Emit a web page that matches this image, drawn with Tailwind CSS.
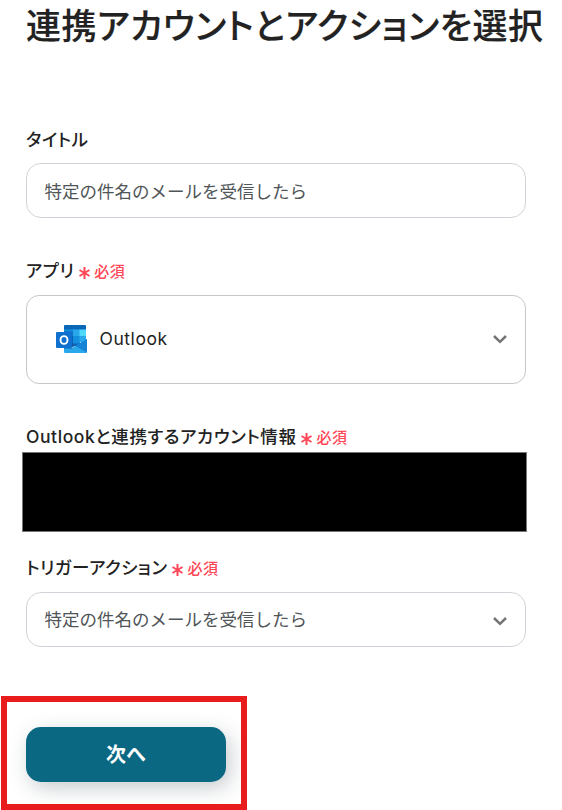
<!DOCTYPE html>
<html lang="ja">
<head>
<meta charset="utf-8">
<title>連携アカウントとアクションを選択</title>
<script src="https://cdn.jsdelivr.net/npm/@tailwindcss/browser@4"></script>
</head>
<body class="w-[562px] h-[810px] overflow-hidden bg-white text-[#222] font-['Inter','Noto_Sans_CJK_JP',sans-serif]">
<main class="flex flex-col items-start pl-[26px]">
  <h1 class="mt-[4px] h-[44px] leading-[44px] text-[35px] font-medium tracking-[.5px] whitespace-nowrap [font-feature-settings:'palt'] [-webkit-text-stroke:.2px_#222]">連携アカウントとアクションを選択</h1>

  <label class="mt-[78px] h-[28px] leading-[28px] text-[17.5px] font-medium tracking-[.5px] [font-feature-settings:'palt']">タイトル</label>
  <div class="mt-[9px] w-[500px] h-[55px] rounded-[15px] border border-[#cfd3d9] pl-[17.500px] pt-[3px] flex items-center text-[17.5px] text-[#505558] whitespace-nowrap">特定の件名のメールを受信したら</div>

  <div class="mt-[39px] h-[28px] leading-[28px] flex items-center whitespace-nowrap [font-feature-settings:'palt']">
    <span class="text-[17.5px] font-medium tracking-[.5px]">アプリ</span>
    <svg class="ml-[4.500px] mt-[3px] w-[11px] h-[12px]" viewBox="0 0 11 12" fill="none" stroke="#ff4757" stroke-width="2"><path d="M5.5 0v12M.5 3l10 6M10.500 3l-10 6"/></svg>
    <span class="ml-[4.500px] mt-[1px] text-[15px] font-medium tracking-[.5px] text-[#ff4757]">必須</span>
  </div>
  <div class="mt-[10px] w-[500px] h-[89px] rounded-[13px] border border-[#c8c8c8] pl-[28.500px] pr-[17px] flex items-center">
    <svg class="w-[32px] h-[29px]" viewBox="0 0 32 29">
      <path fill="#0a67b7" d="M9 0h20q1 0 1 1v4H8V1q0-1 1-1z"/>
      <path fill="#1490df" d="M8 4.500h11V12H8z"/><path fill="#28a8ea" d="M17 4.500h7V12h-7z"/><path fill="#50d9ff" d="M23.500 4.500H30V12h-6.500z"/>
      <path fill="#0f6fc4" d="M8 11h10v9H8z"/><path fill="#1490df" d="M17 11h7v9h-7z"/><path fill="#28a8ea" d="M23.500 11H30v6h-6.500z"/>
      <path fill="#0f5fae" d="M16 18.500h9L20 21l-4 1z"/>
      <path fill="#28a8ea" d="M31 14v13q0 1-1 1H9q-1 0-1-1v-4h8l5-3z"/>
      <path fill="#1583d5" d="M31 14v13.500L19 20.800z"/>
      <path fill="#0a4da0" opacity=".4" d="M8 6h8q1 0 1 1v16l-1 1H8z"/>
      <rect y="7" width="16" height="16" rx="1" fill="#0f70cf"/>
      <ellipse cx="8" cy="15" rx="3.500" ry="3.900" fill="none" stroke="#fff" stroke-width="1.900"/>
    </svg>
    <span class="ml-[12px] text-[17.5px] tracking-[.55px] text-[#222]">Outlook</span>
    <svg class="ml-auto -mt-[1px] w-[16px] h-[10px]" viewBox="0 0 16 10" fill="none" stroke="#747474" stroke-width="2.500"><path d="M2 2l6 5.800L14 2"/></svg>
  </div>

  <div class="mt-[39px] h-[28px] leading-[28px] flex items-center whitespace-nowrap [font-feature-settings:'palt']">
    <span class="text-[17.5px] font-medium tracking-[.58px]">Outlookと連携するアカウント情報</span>
    <svg class="ml-[4.500px] mt-[3px] w-[11px] h-[12px]" viewBox="0 0 11 12" fill="none" stroke="#ff4757" stroke-width="2"><path d="M5.5 0v12M.5 3l10 6M10.500 3l-10 6"/></svg>
    <span class="ml-[4.500px] mt-[1px] text-[15px] font-medium tracking-[.5px] text-[#ff4757]">必須</span>
  </div>
  <div class="mt-[1px] -ml-[4px] w-[505px] h-[80px] bg-black border border-[#777]"></div>

  <div class="mt-[22px] h-[28px] leading-[28px] flex items-center whitespace-nowrap [font-feature-settings:'palt']">
    <span class="text-[17.5px] font-medium tracking-[.5px]">トリガーアクション</span>
    <svg class="ml-[4.500px] mt-[3px] w-[11px] h-[12px]" viewBox="0 0 11 12" fill="none" stroke="#ff4757" stroke-width="2"><path d="M5.5 0v12M.5 3l10 6M10.500 3l-10 6"/></svg>
    <span class="ml-[4.500px] mt-[1px] text-[15px] font-medium tracking-[.5px] text-[#ff4757]">必須</span>
  </div>
  <div class="mt-[10px] w-[500px] h-[55px] rounded-[15px] border border-[#cfd3d9] pl-[17.500px] pr-[17px] flex items-center text-[17.5px] text-[#505558] whitespace-nowrap">
    <span class="mt-[2px]">特定の件名のメールを受信したら</span>
    <svg class="ml-auto mt-[3px] w-[16px] h-[10px]" viewBox="0 0 16 10" fill="none" stroke="#747474" stroke-width="2.500"><path d="M2 2l6 5.800L14 2"/></svg>
  </div>

  <div class="mt-[49px] -ml-[25px] w-[246px] h-[114px] border-[6px] border-[#e81c1c] pt-[25px] pl-[19px] overflow-hidden">
    <button class="w-[200px] h-[55px] rounded-[15px] bg-[#0b6882] text-white text-[20px] font-bold shadow-[4px_6px_20px_rgba(30,50,65,0.25)]">次へ</button>
  </div>
</main>
</body>
</html>
